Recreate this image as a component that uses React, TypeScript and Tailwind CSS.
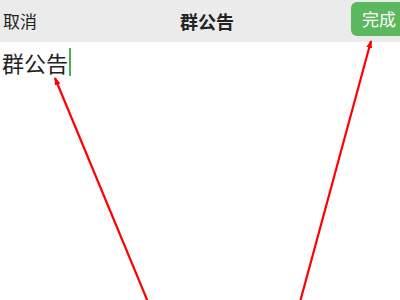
const cjk = "font-['Noto_Sans_CJK_SC','Noto_Sans',sans-serif]"

function Arrows() {
  return (
    <svg className="absolute inset-0 pointer-events-none" width="400" height="300" viewBox="0 0 400 300">
      <defs>
        <marker id="head" markerWidth="8" markerHeight="8" refX="7" refY="4" orient="auto" markerUnits="userSpaceOnUse">
          <path d="M0 1 L8 4 L0 7 Z" fill="#ff0000" />
        </marker>
      </defs>
      <line x1="148" y1="302" x2="55" y2="78" stroke="#ff0000" strokeWidth="2.2" markerEnd="url(#head)" />
      <line x1="300" y1="302" x2="371" y2="41" stroke="#ff0000" strokeWidth="2.2" markerEnd="url(#head)" />
    </svg>
  )
}

export default function App() {
  return (
    <div className={`relative w-[400px] h-[300px] overflow-hidden bg-white ${cjk}`}>
      {/* top bar */}
      <div className="relative h-[42px] bg-[#ebebeb] flex items-center justify-between">
        <span className="pl-[3px] text-[17px] text-[#222]">取消</span>
        <span className="absolute left-[180px] top-[8px] text-[18px] font-bold text-[#222]">群公告</span>
        <button className="mt-[-4px] mr-[-8px] h-[34px] w-[57px] pl-[11px] text-left rounded-[6px] bg-[#5cb85e] text-white text-[17px]">
          完成
        </button>
      </div>

      {/* editor */}
      <div className="pt-[5px] pl-[2px] flex items-center">
        <span className="text-[22px] leading-[30px] text-[#222]">群公告</span>
        <span className="ml-[1px] w-[2px] h-[28px] bg-[#4caf50]" />
      </div>

      <Arrows />
    </div>
  )
}
